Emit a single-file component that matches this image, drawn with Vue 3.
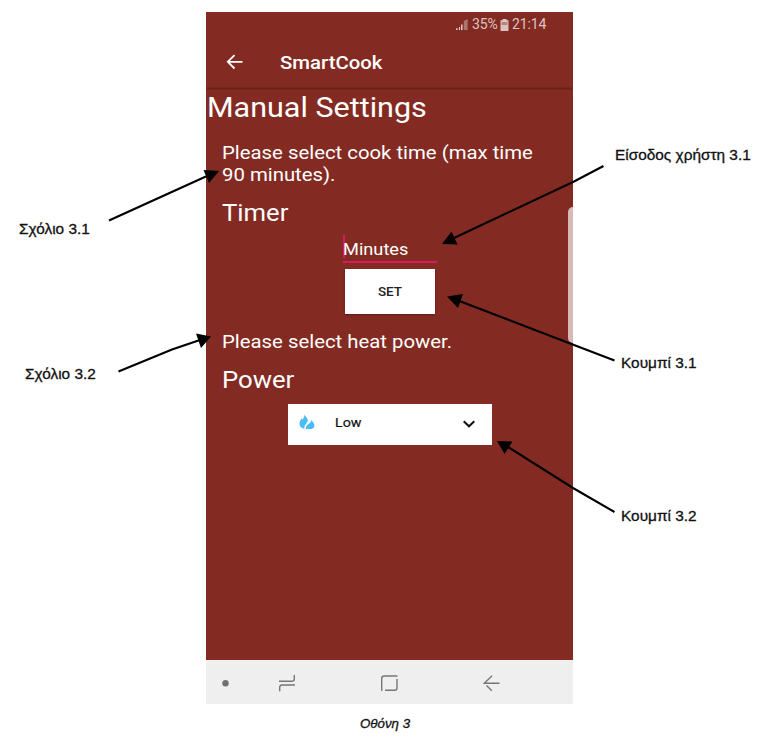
<script setup>
const callouts = [
  { id: 'comment-1', text: 'Σχόλιο 3.1' },
  { id: 'comment-2', text: 'Σχόλιο 3.2' },
  { id: 'input-1', text: 'Είσοδος χρήστη 3.1' },
  { id: 'button-1', text: 'Κουμπί 3.1' },
  { id: 'button-2', text: 'Κουμπί 3.2' },
]

const arrows = [
  { line: '109,220.5 153,200.5 207,176', head: '219,171 209,183 203.5,170' },
  { line: '118.5,371.5 172,349.5 200,340', head: '211,336.5 201,348 196,333.5' },
  { line: '603.5,166 574,181.5 454,238', head: '442,244 451.5,231.5 457.5,244.5' },
  { line: '614.5,360.5 574,345 458,300.5', head: '447,296.5 463,294 458,308' },
  { line: '614.5,512 573,488 508,447', head: '497,441 512.5,441.5 504.5,454' },
]
</script>

<template>
  <figure class="figure">
    <main class="phone">
      <div class="status">
        <svg class="signal" width="12" height="12" viewBox="0 0 12 12">
          <path d="M0 9.3h1.6V11H0z M2.9 8h1.2v3H2.9z" fill="#dcc3c0" />
          <path d="M5 5.5h1.6V11H5z" fill="#dcc3c0" />
          <path d="M7.8 2l3.8-2v11H7.8z" fill="#ae7671" />
        </svg>
        <span class="percent">35%</span>
        <svg class="battery" width="9" height="12" viewBox="0 0 9 12">
          <path d="M2.5 0h4v1.3h2V12h-8V1.3h2z" fill="#dcc3c0" />
          <path d="M1.5 3h6v3h-6z" fill="#b78581" />
        </svg>
        <span class="clock">21:14</span>
      </div>
      <header class="appbar">
        <svg class="back" width="18" height="16" viewBox="0 0 18 16">
          <path d="M8.5 1.2L1.8 7.8l6.7 6.7M2 7.8h14.5" fill="none" stroke="#fff" stroke-width="1.8" />
        </svg>
        <span class="title wide">SmartCook</span>
      </header>
      <section class="content">
        <h1 class="wide">Manual Settings</h1>
        <p class="hint time-hint wide">Please select cook time (max time<br />90 minutes).</p>
        <h2 class="timer wide">Timer</h2>
        <div class="minutes"><span class="cursor"></span><span class="entry wide">Minutes</span></div>
        <button class="set">SET</button>
        <p class="hint heat-hint wide">Please select heat power.</p>
        <h2 class="power wide">Power</h2>
        <div class="select">
          <svg class="flame" width="16" height="16" viewBox="0 0 16 16">
            <path d="M5.3 0.3C6 2.7 8.9 3.7 8.8 6.6C8.6 9.2 5.2 10.5 5.3 14.6C2.3 14.3.3 12 .5 9.2C.6 6.9 1.8 6 2.5 4.4L3.4 5.4C5 4.1 5.6 2.4 5.3.3z" fill="#48bdfa" />
            <path d="M12.7 5.2C12.6 7.6 15.6 8.7 15.4 11.6C15.3 13.7 14.1 14.9 12.5 15H6.9C6.4 12.7 7.8 11.4 9.6 10C11.3 8.7 12.5 7.6 12.7 5.2z" fill="#48bdfa" />
          </svg>
          <span class="value wide">Low</span>
          <svg class="chevron" width="14" height="9" viewBox="0 0 14 9">
            <path d="M1.7 1.3L7 6.3l5.3-5" fill="none" stroke="#111" stroke-width="2" />
          </svg>
        </div>
      </section>
      <nav class="navbar">
        <svg width="367" height="44" viewBox="0 0 367 44" fill="none" stroke="#777" stroke-width="1.4">
          <circle cx="19.5" cy="23.3" r="3.2" fill="#707070" stroke="none" />
          <path d="M73 21.2h13q2.3 0 2.3-2.3v-4M89 25H76q-2.3 0-2.3 2.3v4" />
          <path d="M191.5 16h-13.3q-2.5 0-2.5 2.5V31M179 30.3h9.8q2.2 0 2.2-2.2V19" />
          <path d="M293.5 23.3H278.3L286 15.7M280.5 25.5l5.3 5.3" />
        </svg>
      </nav>
      <div class="edge"></div>
    </main>
    <figcaption>Οθόνη 3</figcaption>

    <svg class="arrows" width="767" height="740" viewBox="0 0 767 740">
      <g v-for="arrow in arrows" :key="arrow.line">
        <polyline :points="arrow.line" fill="none" stroke="#000" stroke-width="2.1" />
        <polygon :points="arrow.head" />
      </g>
    </svg>
    <span v-for="item in callouts" :key="item.id" class="callout" :class="item.id">{{ item.text }}</span>
  </figure>
</template>

<style>
body {
  background: #fff;
}
</style>

<style scoped>
.figure {
  position: relative;
  box-sizing: border-box;
  width: 767px;
  height: 740px;
  margin: 0;
  padding: 12px 0 0 206px;
  overflow: hidden;
  font-family: "Liberation Sans", sans-serif;
}
.phone {
  position: relative;
  display: flex;
  flex-direction: column;
  width: 367px;
  height: 692px;
  overflow: hidden;
  background: #832b22;
  color: #fff;
  font-family: Roboto, sans-serif;
}
.wide {
  transform: scaleX(1.07);
  transform-origin: left center;
}
.status {
  display: flex;
  align-items: center;
  height: 25px;
  padding-left: 250px;
  color: #dcc3c0;
  font-size: 14px;
  letter-spacing: -0.15px;
  line-height: 25px;
}
.percent {
  width: 25px;
  margin-left: 4px;
}
.battery {
  margin-left: 3px;
}
.clock {
  margin-left: 3px;
}
.appbar {
  display: flex;
  flex: none;
  align-items: center;
  box-sizing: border-box;
  height: 51px;
  padding-left: 20px;
  border-bottom: 1px solid #75261e;
  box-shadow: 0 1px 2px rgba(60, 10, 5, 0.4);
}
.back {
  margin-bottom: 1px;
}
.title {
  margin-left: 36px;
  font-size: 19px;
  font-weight: 500;
}
.content {
  display: flex;
  flex: 1;
  flex-direction: column;
  align-items: flex-start;
}
h1,
h2,
p {
  margin: 0;
  font-weight: 400;
  white-space: nowrap;
}
h1 {
  margin: 3px 0 0 1px;
  font-size: 28.5px;
  line-height: 34px;
}
h2 {
  margin-left: 16px;
  font-size: 24px;
  line-height: 28px;
}
.hint {
  margin-left: 16px;
  font-size: 19px;
  line-height: 22px;
}
.time-hint {
  margin-top: 17px;
}
.timer {
  margin-top: 13px;
}
.minutes {
  display: flex;
  box-sizing: border-box;
  width: 94px;
  height: 28px;
  margin: 8px 0 0 137px;
  border-bottom: 2px solid #d81b60;
}
.cursor {
  width: 2px;
  height: 23px;
  background: #d81b60;
}
.entry {
  margin-left: -2px;
  font-size: 17px;
  line-height: 28px;
}
.set {
  width: 90px;
  height: 45px;
  margin: 6px 0 0 139px;
  padding: 0;
  border: 0;
  background: #fff;
  box-shadow: 0 1px 2px rgba(50, 5, 0, 0.45);
  color: #222;
  font: 500 13.5px/45px Roboto, sans-serif;
}
.heat-hint {
  margin-top: 17px;
}
.power {
  margin-top: 13px;
}
.select {
  display: flex;
  align-items: center;
  box-sizing: border-box;
  width: 204px;
  height: 41px;
  margin: 10px 0 0 82px;
  padding-left: 11px;
  background: #fff;
  color: #111;
}
.flame {
  margin-bottom: 5px;
}
.value {
  width: 127px;
  margin: 0 0 4px 20px;
  font-size: 13.3px;
  -webkit-text-stroke: 0.2px #111;
}
.navbar {
  height: 44px;
  background: #efefef;
}
.navbar svg {
  display: block;
}
.edge {
  position: absolute;
  top: 195px;
  right: 0;
  width: 5px;
  height: 136px;
  border-radius: 5px 0 0 5px;
  background: #d7b9b7;
}
figcaption {
  width: 358px;
  margin-top: 12px;
  color: #111;
  font-size: 13.3px;
  font-style: italic;
  line-height: 16px;
  text-align: center;
  -webkit-text-stroke: 0.3px #111;
}
.arrows {
  position: absolute;
  inset: 0;
}
.callout {
  position: absolute;
  color: #111;
  font-size: 15.4px;
  line-height: 18px;
  white-space: nowrap;
  -webkit-text-stroke: 0.3px #111;
}
.comment-1 { left: 19px; top: 220px; }
.comment-2 { left: 25px; top: 365px; }
.input-1 { left: 615px; top: 146px; }
.button-1 { left: 621px; top: 354px; }
.button-2 { left: 621px; top: 507px; }
</style>
